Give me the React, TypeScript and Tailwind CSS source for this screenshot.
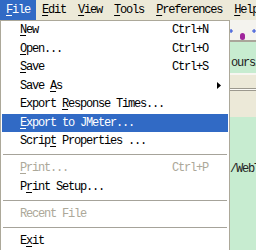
import React from "react";

const font = "font-['Liberation_Mono',monospace] text-[12px] tracking-[-1.2px]";

type Item = {
  label: React.ReactNode;
  shortcut?: string;
  disabled?: boolean;
  active?: boolean;
  submenu?: boolean;
};

const U = ({ children }: { children: React.ReactNode }) => (
  <span className="underline underline-offset-[2px]">{children}</span>
);

const MenuItem = ({ item }: { item: Item }) => (
  <div
    className={`flex items-center h-[18.5px] pl-[18px] ${
      item.active ? "bg-[#316ac5] text-white" : item.disabled ? "text-[#aca899]" : "text-black"
    }`}
  >
    <span className="w-[152px] shrink-0 whitespace-pre">{item.label}</span>
    {item.shortcut && <span className="whitespace-pre">{item.shortcut}</span>}
    {item.submenu && (
      <svg className="ml-auto mr-[7px]" width="4" height="7" viewBox="0 0 4 7">
        <path d="M0 0 L4 3.5 L0 7 Z" fill="#000" />
      </svg>
    )}
  </div>
);

const Separator = () => (
  <div className="h-[8.5px] flex items-center px-[1px]">
    <div className="h-px w-full bg-[#a6a39a]" />
  </div>
);

const Plus = () => (
  <svg width="6" height="6" viewBox="0 0 6 6">
    <path d="M3 0 V6 M0 3 H6" stroke="#2f4fd8" strokeWidth="1.6" />
  </svg>
);

export default function App() {
  const top: Item[] = [
    { label: <><U>N</U>ew</>, shortcut: "Ctrl+N" },
    { label: <><U>O</U>pen...</>, shortcut: "Ctrl+O" },
    { label: <><U>S</U>ave</>, shortcut: "Ctrl+S" },
    { label: <>Save <U>A</U>s</>, submenu: true },
    { label: <>Export <U>R</U>esponse Times...</> },
    { label: <><U>E</U>xport to JMeter...</>, active: true },
    { label: <>Scrip<U>t</U> Properties ...</> },
  ];
  const print: Item[] = [
    { label: <><U>P</U>rint...</>, shortcut: "Ctrl+P", disabled: true },
    { label: <>P<U>r</U>int Setup...</> },
  ];

  return (
    <div className={`relative w-[256px] h-[250px] overflow-hidden bg-[#ece9d8] ${font}`}>
      {/* menu bar */}
      <div className="flex h-[20px] items-center bg-[#ece9d8] text-black">
        <div className="h-full flex items-center px-[6px] bg-[#316ac5] text-white">
          <U>F</U>ile
        </div>
        <div className="px-[6px]"><U>E</U>dit</div>
        <div className="px-[6px]"><U>V</U>iew</div>
        <div className="px-[6px]"><U>T</U>ools</div>
        <div className="px-[6px]"><U>P</U>references</div>
        <div className="px-[6px] whitespace-nowrap"><U>H</U>elp</div>
      </div>

      {/* window behind the menu */}
      <div className="flex flex-col">
        <div className="h-[20px] bg-[#f4f3ee] flex items-start pl-[229px] pt-[8px] gap-[7px]">
          <Plus />
          <div className="mt-[5px] w-[7px] h-[7px] rounded-full bg-[#a0259c]" />
          <Plus />
        </div>
        <div className="h-[2px] bg-[#a9a69a]" />
        <div className="h-[31px] bg-[#c7ecd0] pl-[231px] pt-[12px] text-[#222] whitespace-nowrap">
          ours/
        </div>
        <div className="h-[2px] bg-[#f7f6f1]" />
        <div className="h-[13px]" />
        <div className="h-px bg-[#9c998e]" />
        <div className="h-px bg-[#fbfaf6]" />
        <div className="h-px bg-[#9c998e]" />
        <div className="h-[26px]" />
        <div className="h-[133px] bg-[#c7ecd0] pl-[230px] pt-[43px] text-[#222] whitespace-nowrap">
          /WebTours/
        </div>
      </div>

      {/* open File menu */}
      <div className="absolute left-0 top-[20px] w-[230px] h-[240px] bg-white border border-[#aca899] p-[1px] pt-0">
        {top.map((it, i) => (
          <MenuItem key={i} item={it} />
        ))}
        <Separator />
        {print.map((it, i) => (
          <MenuItem key={i} item={it} />
        ))}
        <Separator />
        <MenuItem item={{ label: "Recent File", disabled: true }} />
        <Separator />
        <MenuItem item={{ label: <>E<U>x</U>it</> }} />
      </div>
    </div>
  );
}
